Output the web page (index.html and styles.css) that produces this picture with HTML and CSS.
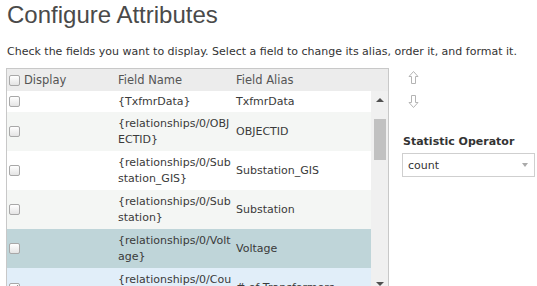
FILE: index.html
```html
<!DOCTYPE html>
<html lang="en">
<head>
    <meta charset="UTF-8">
    <title>Configure Attributes</title>
    <link rel="stylesheet" href="styles.css">
</head>
<body>
    <h1 class="title">Configure Attributes</h1>
    <p class="hint">Check the fields you want to display. Select a field to change its alias, order it, and format it.</p>

    <div class="layout">
        <div class="grid">
            <div class="grid-head">
                <div class="cell cell-check"><span class="box"></span><span class="head-label">Display</span></div>
                <div class="cell">Field Name</div>
                <div class="cell">Field Alias</div>
            </div>
            <div class="grid-body">
                <div class="rows">
                    <div class="row row-short">
                        <div class="cell cell-check"><span class="box"></span></div>
                        <div class="cell cell-name">{TxfmrData}</div>
                        <div class="cell">TxfmrData</div>
                    </div>
                    <div class="row row-odd">
                        <div class="cell cell-check"><span class="box"></span></div>
                        <div class="cell cell-name">{relationships/0/OBJECTID}</div>
                        <div class="cell">OBJECTID</div>
                    </div>
                    <div class="row">
                        <div class="cell cell-check"><span class="box"></span></div>
                        <div class="cell cell-name">{relationships/0/Substation_GIS}</div>
                        <div class="cell">Substation_GIS</div>
                    </div>
                    <div class="row row-odd">
                        <div class="cell cell-check"><span class="box"></span></div>
                        <div class="cell cell-name">{relationships/0/Substation}</div>
                        <div class="cell">Substation</div>
                    </div>
                    <div class="row row-selected">
                        <div class="cell cell-check"><span class="box"></span></div>
                        <div class="cell cell-name">{relationships/0/Voltage}</div>
                        <div class="cell">Voltage</div>
                    </div>
                    <div class="row row-hover">
                        <div class="cell cell-check"><span class="box checked"></span></div>
                        <div class="cell cell-name">{relationships/0/Count}</div>
                        <div class="cell"># of Transformers</div>
                    </div>
                </div>
                <!-- fake scrollbar so it looks the same everywhere -->
                <div class="scrollbar">
                    <div class="scroll-btn"><span class="tri tri-up"></span></div>
                    <div class="scroll-track"><div class="scroll-thumb"></div></div>
                    <div class="scroll-btn"><span class="tri tri-down"></span></div>
                </div>
            </div>
        </div>

        <div class="side">
            <div class="move">
                <svg class="move-icon" width="11" height="13" viewBox="0 0 11 13">
                    <path d="M5.5 0.5 L10 5.5 H7.5 V12.5 H3.5 V5.5 H1 Z" fill="none" stroke="#b4b4b4" stroke-width="1"/>
                </svg>
                <svg class="move-icon" width="11" height="13" viewBox="0 0 11 13">
                    <path d="M5.5 12.5 L10 7.5 H7.5 V0.5 H3.5 V7.5 H1 Z" fill="none" stroke="#b4b4b4" stroke-width="1"/>
                </svg>
            </div>
            <label class="side-label">Statistic Operator</label>
            <div class="select">
                <span>count</span>
                <span class="caret"></span>
            </div>
        </div>
    </div>
</body>
</html>
```

FILE: styles.css
```css
body {
    margin: 0;
    padding: 0 0 0 7px;
    font-family: "DejaVu Sans", Verdana, sans-serif;
    font-size: 11px;
    color: #333;
    overflow: hidden;
}

.title {
    margin: 1px 0 0 0;
    font-family: "Liberation Sans", Arial, sans-serif;
    font-size: 24px;
    font-weight: normal;
    line-height: 28px;
    color: #4a4a4a;
}

.hint {
    margin: 15px 0 8px 0;
    line-height: 16px;
    color: #333;
}

.layout {
    display: flex;
    align-items: flex-start;
}

.grid {
    flex-shrink: 0;
    width: 381px;
    margin-left: -1px;
    border: 1px solid #c8c8c8;
    border-bottom: none;
}

.grid-head {
    display: grid;
    grid-template-columns: 111px 118px 1fr;
    align-items: center;
    height: 22px;
    background: #ececec;
    color: #555;
    font-size: 11.5px;
}

.cell {
    line-height: 16px;
}

.cell-check {
    display: flex;
    align-items: center;
    padding-left: 2px;
}

.head-label {
    margin-left: 4px;
}

.grid-body {
    display: flex;
    height: 201px;
}

.rows {
    flex: 1;
    overflow: hidden;
}

.row {
    display: grid;
    grid-template-columns: 111px 118px 1fr;
    align-items: center;
    height: 39px;
    background: #fff;
    color: #3a3a3a;
}

.row-short {
    height: 21px;
}

.row-odd {
    background: #f4f6f4;
}

.row-selected {
    background: #bfd5d9;
}

.row-hover {
    background: #e1eef9;
    height: 40px;
}

.cell-name {
    word-break: break-all;
}

.box {
    display: inline-block;
    box-sizing: border-box;
    width: 11px;
    height: 11px;
    border: 1px solid #a8a8a8;
    border-radius: 2px;
    background: linear-gradient(#ffffff, #e4e4e4);
    position: relative;
}

.box.checked::after {
    content: "";
    position: absolute;
    left: 2px;
    top: 0;
    width: 3px;
    height: 6px;
    border: solid #333;
    border-width: 0 2px 2px 0;
    transform: rotate(40deg);
}

.scrollbar {
    width: 17px;
    display: flex;
    flex-direction: column;
    background: #f0f0f0;
}

.scroll-btn {
    height: 17px;
    display: flex;
    align-items: center;
    justify-content: center;
}

.scroll-track {
    flex: 1;
    padding-top: 11px;
}

.scroll-thumb {
    width: 12px;
    height: 41px;
    margin-left: 3px;
    background: #c1c1c1;
}

.tri {
    width: 0;
    height: 0;
    border-left: 4px solid transparent;
    border-right: 4px solid transparent;
}

.tri-up {
    border-bottom: 4px solid #505050;
}

.tri-down {
    border-top: 4px solid #505050;
}

.side {
    flex-shrink: 0;
    margin-left: 13px;
    width: 133px;
    display: flex;
    flex-direction: column;
}

.move {
    display: flex;
    flex-direction: column;
    gap: 11px;
    padding: 3px 0 0 6px;
}

.side-label {
    margin-top: 26px;
    padding-left: 1px;
    font-weight: bold;
    line-height: 16px;
    color: #333;
}

.select {
    margin-top: 3px;
    height: 22px;
    border: 1px solid #cfcfcf;
    display: flex;
    align-items: center;
    justify-content: space-between;
    padding: 0 6px 0 5px;
    color: #333;
}

.caret {
    width: 0;
    height: 0;
    border-left: 3px solid transparent;
    border-right: 3px solid transparent;
    border-top: 4px solid #aaa;
}
```
